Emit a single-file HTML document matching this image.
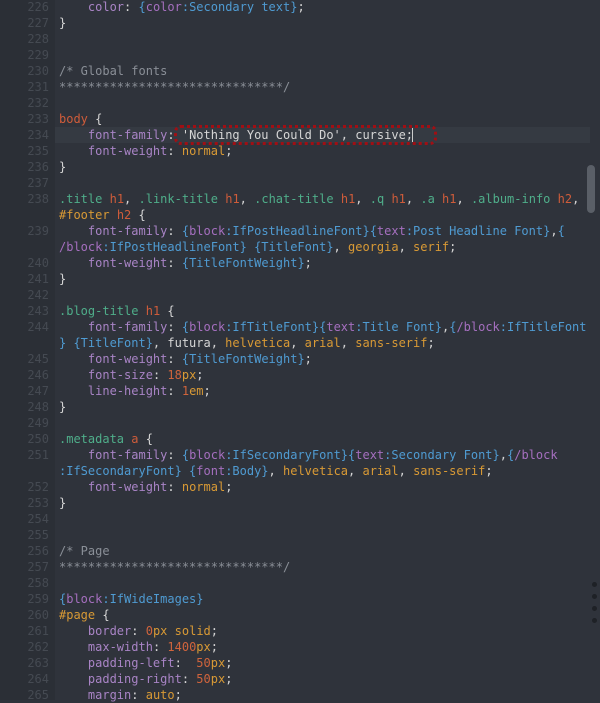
<!DOCTYPE html>
<html><head><style>
html,body{margin:0;padding:0;width:600px;height:700px;overflow:hidden;background:#2f333b;}
#g{position:absolute;left:0;top:0;width:55px;height:700px;background:#2b2f36;}
#hl{position:absolute;left:55px;top:127px;width:535px;height:16px;background:#353a42;}
pre{margin:0;position:absolute;top:-1px;font-family:"DejaVu Sans Mono","Liberation Mono",monospace;font-size:12px;line-height:16px;}
#nums{left:0;width:49px;text-align:right;color:#454a52;}
#code{left:59px;color:#d6d6d6;}
.p{color:#a984c6}.v{color:#d99a35}.n{color:#d0643c}.s{color:#4fae8a}.t{color:#cf5c3a}.c{color:#8a8f97}.b{color:#4f9bd2}.k{color:#a56fbf}
#box{position:absolute;left:174px;top:125px;width:257px;height:14px;border:3px dotted #a00f14;border-radius:7px;}
#cur{position:absolute;left:412px;top:128px;width:1px;height:14px;background:#ccc;}
#sb{position:absolute;left:587px;top:165px;width:8px;height:48px;background:#5a5f67;border-radius:4px;}
.d{position:absolute;left:592px;width:5px;height:5px;border-radius:50%;background:#1e2126;}
</style></head><body>
<div id="g"></div><div id="hl"></div>
<pre id="nums">226
227
228
229
230
231
232
233
234
235
236
237
238

239

240
241
242
243
244

245
246
247
248
249
250
251

252
253
254
255
256
257
258
259
260
261
262
263
264
265</pre>
<pre id="code">    <span class="p">color</span>: <span class="b">{</span><span class="k">color</span><span class="b">:Secondary text}</span>;
}


<span class="c">/* Global fonts</span>
<span class="c">*******************************/</span>

<span class="t">body</span> {
    <span class="p">font-family</span>: 'Nothing You Could Do', cursive;
    <span class="p">font-weight</span>: <span class="v">normal</span>;
}

<span class="s">.title</span> <span class="t">h1</span>, <span class="s">.link-title</span> <span class="t">h1</span>, <span class="s">.chat-title</span> <span class="t">h1</span>, <span class="s">.q</span> <span class="t">h1</span>, <span class="s">.a</span> <span class="t">h1</span>, <span class="s">.album-info</span> <span class="t">h2</span>,
<span class="v">#footer</span> <span class="t">h2</span> {
    <span class="p">font-family</span>: <span class="b">{</span><span class="k">block</span><span class="b">:IfPostHeadlineFont}{</span><span class="k">text</span><span class="b">:Post Headline Font}</span>,<span class="b">{</span>
<span class="k">/block</span><span class="b">:IfPostHeadlineFont} {TitleFont}</span>, <span class="v">georgia</span>, <span class="v">serif</span>;
    <span class="p">font-weight</span>: <span class="b">{TitleFontWeight}</span>;
}

<span class="s">.blog-title</span> <span class="t">h1</span> {
    <span class="p">font-family</span>: <span class="b">{</span><span class="k">block</span><span class="b">:IfTitleFont}{</span><span class="k">text</span><span class="b">:Title Font}</span>,<span class="b">{</span><span class="k">/block</span><span class="b">:IfTitleFont</span>
<span class="b">} {TitleFont}</span>, futura, <span class="v">helvetica</span>, <span class="v">arial</span>, <span class="v">sans-serif</span>;
    <span class="p">font-weight</span>: <span class="b">{TitleFontWeight}</span>;
    <span class="p">font-size</span>: <span class="n">18</span><span class="v">px</span>;
    <span class="p">line-height</span>: <span class="n">1</span><span class="v">em</span>;
}

<span class="s">.metadata</span> <span class="t">a</span> {
    <span class="p">font-family</span>: <span class="b">{</span><span class="k">block</span><span class="b">:IfSecondaryFont}{</span><span class="k">text</span><span class="b">:Secondary Font}</span>,<span class="b">{</span><span class="k">/block</span>
<span class="b">:IfSecondaryFont} {</span><span class="k">font</span><span class="b">:Body}</span>, <span class="v">helvetica</span>, <span class="v">arial</span>, <span class="v">sans-serif</span>;
    <span class="p">font-weight</span>: <span class="v">normal</span>;
}


<span class="c">/* Page</span>
<span class="c">*******************************/</span>

<span class="b">{</span><span class="k">block</span><span class="b">:IfWideImages}</span>
<span class="v">#page</span> {
    <span class="p">border</span>: <span class="n">0</span><span class="v">px</span> <span class="v">solid</span>;
    <span class="p">max-width</span>: <span class="n">1400</span><span class="v">px</span>;
    <span class="p">padding-left</span>:  <span class="n">50</span><span class="v">px</span>;
    <span class="p">padding-right</span>: <span class="n">50</span><span class="v">px</span>;
    <span class="p">margin</span>: <span class="v">auto</span>;</pre>
<div id="box"></div><div id="cur"></div><div id="sb"></div>
<div class="d" style="top:582px"></div><div class="d" style="top:594px"></div><div class="d" style="top:606px"></div><div class="d" style="top:618px"></div>
</body></html>
